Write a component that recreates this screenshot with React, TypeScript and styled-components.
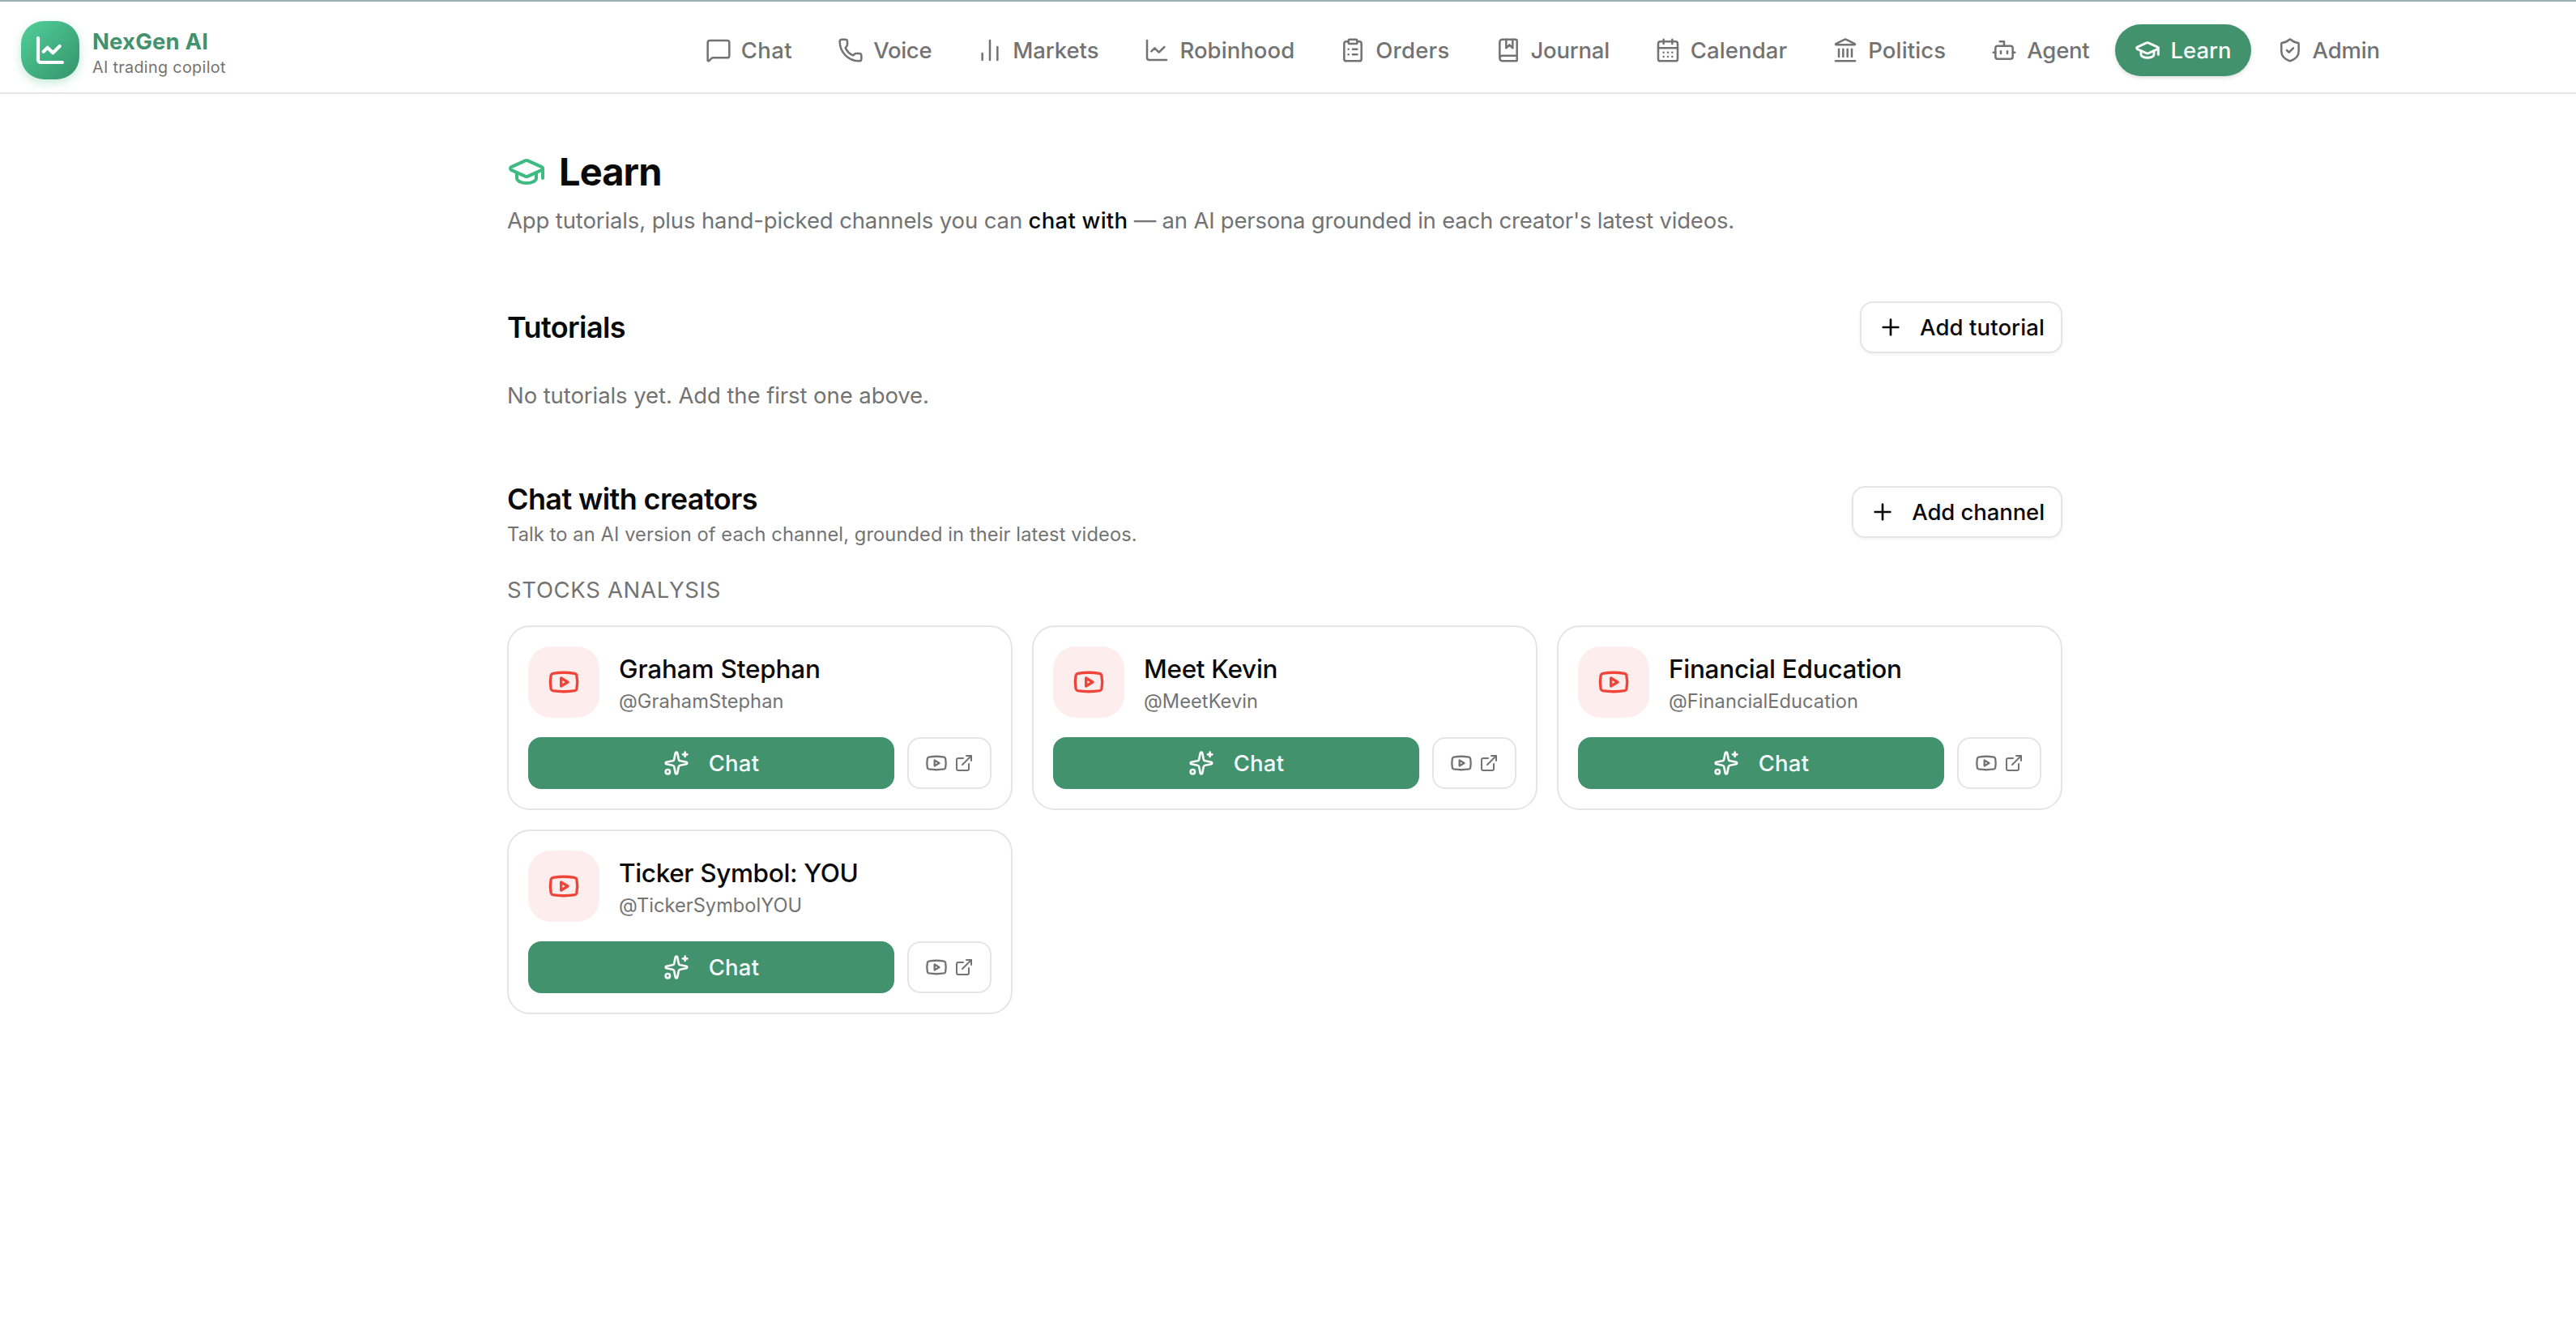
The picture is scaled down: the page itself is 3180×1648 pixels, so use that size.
import React from "react";
import styled, { createGlobalStyle, css } from "styled-components";
import {
  BookMarked,
  Bot,
  CalendarDays,
  ChartLine,
  ChartNoAxesColumn,
  ClipboardList,
  ExternalLink,
  GraduationCap,
  Landmark,
  MessageSquare,
  Phone,
  Plus,
  ShieldCheck,
  Sparkles,
  Youtube,
  type LucideIcon,
} from "lucide-react";

const color = {
  ink: "#0a0a0a",
  muted: "#737373",
  line: "#e5e5e5",
  green: "#41926d",
  onGreen: "#fafafa",
  mint: "#3dbb83",
  red: "#ef4439",
  redTint: "#fdeded",
};

const GlobalStyle = createGlobalStyle`
  *, *::before, *::after { box-sizing: border-box; }
  body {
    margin: 0;
    background: #fff;
    color: ${color.ink};
    font-family: Inter, "Liberation Sans", sans-serif;
    font-size: 27.5px;
    line-height: 40px;
    -webkit-font-smoothing: antialiased;
  }
  h1, h2, h3, p { margin: 0; }
  svg { display: block; flex: none; }
`;

/* Text run with its own tracking, in pixels */
const Label = styled.span<{ $track?: number }>`
  letter-spacing: ${(p) => p.$track ?? 0}px;
  white-space: nowrap;
`;

const Page = styled.div`
  min-height: 1648px;
  background: #fff;
`;

/* ---------- header ---------- */

const Header = styled.header`
  display: flex;
  align-items: center;
  height: 116px;
  padding: 8px 0 0 26px;
  border-top: 2px solid #9bb3b5;
  border-bottom: 2px solid ${color.line};
`;

const Brand = styled.div`
  display: flex;
  align-items: center;
  gap: 16px;
  flex: 0 0 820.7px;
`;

const LogoTile = styled.div`
  display: grid;
  place-items: center;
  width: 72px;
  height: 72px;
  border-radius: 28px;
  color: #fff;
  background: linear-gradient(135deg, #51d09a 0%, #34936a 100%);
  box-shadow: 0 4px 12px rgba(61, 187, 131, 0.3);
`;

const BrandText = styled.div`
  display: flex;
  flex-direction: column;
  padding-top: 2px;
`;

const BrandName = styled.span`
  font-weight: 700;
  line-height: 40px;
  letter-spacing: 0.15px;
  color: ${color.green};
`;

const BrandTagline = styled.span`
  font-size: 19.75px;
  line-height: 25px;
  letter-spacing: 0.33px;
  color: ${color.muted};
`;

const Nav = styled.nav`
  display: flex;
  align-items: center;
  gap: 8px;
`;

const NavItem = styled.a<{ $active?: boolean }>`
  display: flex;
  align-items: center;
  gap: 12px;
  height: 64px;
  padding: 0 24px;
  border-radius: 32px;
  font-weight: 480;
  color: ${color.muted};
  ${(p) =>
    p.$active &&
    css`
      color: ${color.onGreen};
      background: ${color.green};
      box-shadow: 0 2px 5px rgba(0, 0, 0, 0.14);
    `}
`;

/* ---------- page body ---------- */

const Main = styled.main`
  width: 1920px;
  margin-left: 626px;
  padding-top: 64px;
`;

const TitleRow = styled.div`
  display: flex;
  align-items: center;
  gap: 16px;
  height: 64px;
  color: ${color.mint};
`;

const Title = styled.h1`
  font-size: 47px;
  line-height: 64px;
  font-weight: 670;
  letter-spacing: -0.9px;
  color: ${color.ink};
`;

const Lead = styled.p`
  margin-top: 8px;
  color: ${color.muted};
  white-space: pre;
`;

const Strong = styled.strong`
  font-weight: 500;
  letter-spacing: 0.25px;
  color: ${color.ink};
`;

const Section = styled.section`
  margin-top: 80px;
`;

const SectionHead = styled.div`
  display: flex;
  align-items: center;
  justify-content: space-between;
`;

const SectionTitle = styled.h2`
  font-size: 36px;
  line-height: 56px;
  font-weight: 600;
  letter-spacing: -0.6px;
`;

const SectionNote = styled.p`
  font-size: 23.6px;
  line-height: 32px;
  letter-spacing: 0.125px;
  color: ${color.muted};
`;

const OutlineButton = styled.button`
  display: flex;
  align-items: center;
  gap: 20px;
  height: 64px;
  padding: 0 20px;
  border: 2px solid ${color.line};
  border-radius: 16px;
  background: #fff;
  color: ${color.ink};
  font: inherit;
  font-weight: 500;
  box-shadow: 0 2px 4px rgba(0, 0, 0, 0.05);
`;

const EmptyNote = styled.p`
  margin-top: 32px;
  letter-spacing: -0.08px;
  color: ${color.muted};
`;

const GroupTitle = styled.h3`
  margin-top: 32px;
  font-size: 27.5px;
  line-height: 40px;
  font-weight: 430;
  letter-spacing: 0.67px;
  text-transform: uppercase;
  color: ${color.muted};
`;

const CardGrid = styled.div`
  display: grid;
  grid-template-columns: repeat(3, 1fr);
  gap: 24px;
  margin-top: 24px;
`;

const Card = styled.article`
  display: flex;
  flex-direction: column;
  gap: 24px;
  padding: 24px;
  border: 2px solid ${color.line};
  border-radius: 28px;
`;

const Creator = styled.div`
  display: flex;
  align-items: center;
  gap: 24px;
`;

const Avatar = styled.div`
  display: grid;
  place-items: center;
  width: 88px;
  height: 88px;
  border-radius: 28px;
  color: ${color.red};
  background: ${color.redTint};
`;

const CreatorText = styled.div`
  display: flex;
  flex-direction: column;
`;

const CreatorName = styled(Label)`
  font-size: 31.5px;
  line-height: 48px;
  font-weight: 500;
`;

const CreatorHandle = styled(Label)`
  font-size: 23.6px;
  line-height: 32px;
  color: ${color.muted};
`;

const Actions = styled.div`
  display: flex;
  gap: 16px;
`;

const ChatButton = styled.button`
  display: flex;
  flex: 1;
  align-items: center;
  justify-content: center;
  gap: 24px;
  height: 64px;
  padding: 0;
  border: 0;
  border-radius: 16px;
  color: ${color.onGreen};
  background: ${color.green};
  font: inherit;
  font-weight: 500;
`;

const ChannelLink = styled.a`
  display: flex;
  align-items: center;
  justify-content: center;
  gap: 8px;
  width: 104px;
  height: 64px;
  border: 2px solid ${color.line};
  border-radius: 16px;
  color: ${color.muted};
`;

/* ---------- data ---------- */

type NavEntry = { label: string; icon: LucideIcon; track: number; active?: boolean };

const navEntries: NavEntry[] = [
  { label: "Chat", icon: MessageSquare, track: 0.45 },
  { label: "Voice", icon: Phone, track: -0.3 },
  { label: "Markets", icon: ChartNoAxesColumn, track: -0.07 },
  { label: "Robinhood", icon: ChartLine, track: 0.06 },
  { label: "Orders", icon: ClipboardList, track: 0.25 },
  { label: "Journal", icon: BookMarked, track: -0.25 },
  { label: "Calendar", icon: CalendarDays, track: 0.08 },
  { label: "Politics", icon: Landmark, track: 0.16 },
  { label: "Agent", icon: Bot, track: -0.25 },
  { label: "Learn", icon: GraduationCap, track: 0, active: true },
  { label: "Admin", icon: ShieldCheck, track: -0.2 },
];

type CreatorEntry = { name: string; handle: string; nameTrack: number; handleTrack: number };

const creators: CreatorEntry[] = [
  { name: "Graham Stephan", handle: "@GrahamStephan", nameTrack: -0.17, handleTrack: 0.08 },
  { name: "Meet Kevin", handle: "@MeetKevin", nameTrack: -0.3, handleTrack: 0.06 },
  { name: "Financial Education", handle: "@FinancialEducation", nameTrack: -0.28, handleTrack: 0.06 },
  { name: "Ticker Symbol: YOU", handle: "@TickerSymbolYOU", nameTrack: -0.35, handleTrack: 0.02 },
];

/* ---------- parts ---------- */

function TopBar() {
  return (
    <Header>
      <Brand>
        <LogoTile>
          <ChartLine size={40} strokeWidth={2.5} />
        </LogoTile>
        <BrandText>
          <BrandName>NexGen AI</BrandName>
          <BrandTagline>AI trading copilot</BrandTagline>
        </BrandText>
      </Brand>
      <Nav>
        {navEntries.map(({ label, icon: Icon, track, active }) => (
          <NavItem key={label} $active={active}>
            <Icon size={32} strokeWidth={active ? 2.25 : 1.9} />
            <Label $track={track}>{label}</Label>
          </NavItem>
        ))}
      </Nav>
    </Header>
  );
}

function CreatorCard({ name, handle, nameTrack, handleTrack }: CreatorEntry) {
  return (
    <Card>
      <Creator>
        <Avatar>
          <Youtube size={40} />
        </Avatar>
        <CreatorText>
          <CreatorName $track={nameTrack}>{name}</CreatorName>
          <CreatorHandle $track={handleTrack}>{handle}</CreatorHandle>
        </CreatorText>
      </Creator>
      <Actions>
        <ChatButton>
          <Sparkles size={32} />
          <Label $track={0.2}>Chat</Label>
        </ChatButton>
        <ChannelLink>
          <Youtube size={28} />
          <ExternalLink size={24} />
        </ChannelLink>
      </Actions>
    </Card>
  );
}

export default function App() {
  return (
    <Page>
      <GlobalStyle />
      <TopBar />
      <Main>
        <TitleRow>
          <GraduationCap size={48} />
          <Title>Learn</Title>
        </TitleRow>
        <Lead>
          <Label $track={-0.13}>{"App tutorials, plus hand-picked channels you can "}</Label>
          <Strong>chat with</Strong>
          <Label $track={-0.21}>{" — an AI persona grounded in each creator's latest videos."}</Label>
        </Lead>

        <Section>
          <SectionHead>
            <SectionTitle>Tutorials</SectionTitle>
            <OutlineButton>
              <Plus size={32} />
              <Label $track={0.11}>Add tutorial</Label>
            </OutlineButton>
          </SectionHead>
          <EmptyNote>No tutorials yet. Add the first one above.</EmptyNote>
        </Section>

        <Section>
          <SectionHead>
            <div>
              <SectionTitle>Chat with creators</SectionTitle>
              <SectionNote>
                Talk to an AI version of each channel, grounded in their latest videos.
              </SectionNote>
            </div>
            <OutlineButton>
              <Plus size={32} />
              <Label $track={-0.1}>Add channel</Label>
            </OutlineButton>
          </SectionHead>
          <GroupTitle>Stocks analysis</GroupTitle>
          <CardGrid>
            {creators.map((c) => (
              <CreatorCard key={c.handle} {...c} />
            ))}
          </CardGrid>
        </Section>
      </Main>
    </Page>
  );
}
